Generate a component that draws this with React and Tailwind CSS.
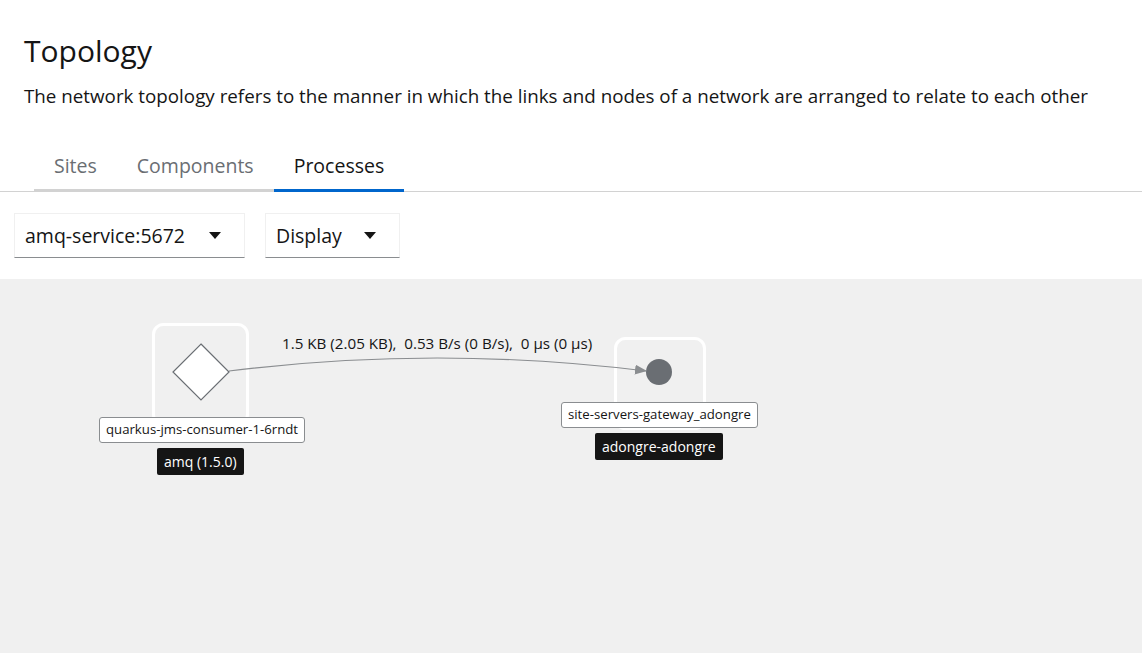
import React from 'react';

const font = { fontFamily: '"Open Sans", "Noto Sans", Arial, sans-serif' };

const tabs = [
  { name: 'Sites', active: false },
  { name: 'Components', active: false },
  { name: 'Processes', active: true },
];

const Caret = () => (
  <svg width="14" height="9" viewBox="0 0 14 9" className="shrink-0">
    <path d="M1 1 L13 1 L7 8 Z" fill="#151515" />
  </svg>
);

const Select = ({ label, width }) => (
  <div
    className={`flex items-center justify-between h-[45px] pl-[10px] pr-[22px] bg-white border border-[#f0f0f0] border-b-[#8a8d90] text-[19.5px] text-[#151515] ${width}`}
  >
    <span>{label}</span>
    <Caret />
  </div>
);

const NodeLabel = ({ text, left, top }) => (
  <div
    className="absolute h-[26px] px-[6px] flex items-center bg-white border border-[#8a8d90] rounded-[3px] text-[13.2px] text-[#151515] whitespace-nowrap"
    style={{ left, top }}
  >
    {text}
  </div>
);

const Badge = ({ text, left, top }) => (
  <div
    className="absolute h-[27px] px-[7px] flex items-center bg-[#151515] rounded-[2px] text-[14px] text-white whitespace-nowrap"
    style={{ left, top }}
  >
    {text}
  </div>
);

export default function App() {
  return (
    <div className="w-[1142px] h-[653px] flex flex-col bg-white overflow-hidden" style={font}>
      <div className="px-6 pt-[33px]">
        <h1 className="text-[30px] leading-[36px] text-[#151515]">Topology</h1>
        <p className="mt-[15px] text-[18.8px] leading-[24px] text-[#151515] whitespace-nowrap">
          The network topology refers to the manner in which the links and nodes of a network are arranged to relate to each other
        </p>
      </div>

      {/* tabs */}
      <div className="mt-[46px] border-b border-[#d2d2d2]">
        <div className="flex ml-[34px]">
          {tabs.map((t) => (
            <div
              key={t.name}
              className={`px-5 pb-[11px] text-[19.5px] leading-[24px] border-b-[3px] -mb-px ${
                t.active ? 'border-[#0066cc] text-[#151515]' : 'border-[#d2d2d2] text-[#6a6e73]'
              }`}
            >
              {t.name}
            </div>
          ))}
        </div>
      </div>

      {/* toolbar */}
      <div className="flex gap-5 px-[14px] py-[21px]">
        <Select label="amq-service:5672" width="w-[231px]" />
        <Select label="Display" width="w-[135px]" />
      </div>

      {/* canvas */}
      <div className="relative flex-1 bg-[#f0f0f0]">
        <svg className="absolute inset-0" width="1142" height="375">
          <defs>
            <marker id="arrow" markerWidth="12" markerHeight="10" refX="11" refY="5" orient="auto" markerUnits="userSpaceOnUse">
              <path d="M0 0 L12 5 L0 10 Z" fill="#8a8d90" />
            </marker>
          </defs>
          {/* node frames */}
          <rect x="153.5" y="45.5" width="94" height="100" rx="10" fill="none" stroke="#ffffff" strokeWidth="3" />
          <rect x="615.5" y="59.5" width="89" height="90" rx="10" fill="none" stroke="#ffffff" strokeWidth="3" />
          {/* edge */}
          <path d="M229 92 Q437 66 646 92" fill="none" stroke="#8a8d90" strokeWidth="1.2" markerEnd="url(#arrow)" />
          {/* diamond */}
          <path d="M201 65 L229 93 L201 121 L173 93 Z" fill="#ffffff" stroke="#6a6e73" strokeWidth="1.2" />
          {/* circle */}
          <circle cx="659" cy="93" r="13" fill="#6a6e73" />
        </svg>
        <div className="absolute left-[282px] top-[55px] text-[15.2px] leading-[18px] text-[#151515] whitespace-pre">
          {'1.5 KB (2.05 KB),  0.53 B/s (0 B/s),  0 μs (0 μs)'}
        </div>
        <NodeLabel text="quarkus-jms-consumer-1-6rndt" left={99} top={138} />
        <Badge text="amq (1.5.0)" left={157} top={169} />
        <NodeLabel text="site-servers-gateway_adongre" left={561} top={123} />
        <Badge text="adongre-adongre" left={595} top={154} />
      </div>
    </div>
  );
}
